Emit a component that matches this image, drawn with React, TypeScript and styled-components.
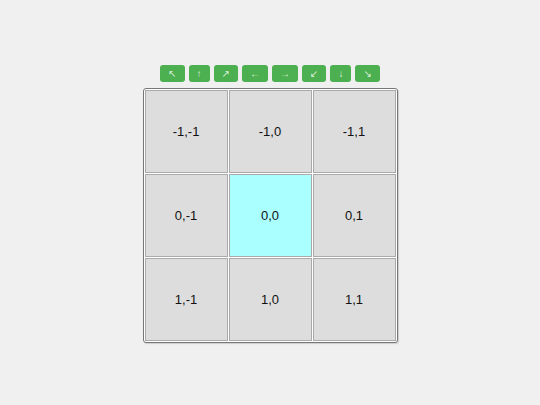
import styled, { createGlobalStyle } from "styled-components";

const GlobalStyle = createGlobalStyle`
	html, body {
		margin: 0;
		padding: 0;
		background: #f0f0f0;
		font-family: "Liberation Sans", Arial, sans-serif;
	}
`;

const Page = styled.div`
	display: flex;
	flex-direction: column;
	align-items: center;
	justify-content: center;
	gap: 6px;
	height: 405px;
	padding-top: 3px;
	box-sizing: border-box;
`;

const Toolbar = styled.div`
	display: flex;
	gap: 4px;
`;

const MoveButton = styled.button`
	height: 17px;
	padding: 0 8px;
	border: none;
	border-radius: 3px;
	background: #4caf50;
	color: rgba(255, 255, 255, 0.85);
	font-family: "Liberation Sans", "DejaVu Sans", sans-serif;
	font-size: 10px;
	line-height: 17px;
	cursor: pointer;
`;

const Board = styled.div`
	display: grid;
	grid-template-columns: repeat(3, 83px);
	grid-auto-rows: 83px;
	gap: 1px;
	padding: 1px;
	background: #fff;
	border: 1px solid #777;
	border-radius: 3px;
	box-shadow: 1px 1px 1px rgba(0, 0, 0, 0.15);
`;

const Cell = styled.div<{ $active?: boolean }>`
	display: flex;
	align-items: center;
	justify-content: center;
	box-sizing: border-box;
	background: ${(p) => (p.$active ? "#aaffff" : "#dddddd")};
	border: 1px solid #aaa;
	color: #111;
	font-size: 13px;
`;

const moves = ["↖", "↑", "↗", "←", "→", "↙", "↓", "↘"];
const offsets = [-1, 0, 1];

export default function App() {
	return (
		<>
			<GlobalStyle />
			<Page>
				<Toolbar>
					{moves.map((m) => (
						<MoveButton key={m}>{m}</MoveButton>
					))}
				</Toolbar>
				<Board>
					{offsets.map((r) =>
						offsets.map((c) => (
							<Cell key={`${r},${c}`} $active={r === 0 && c === 0}>
								{r},{c}
							</Cell>
						))
					)}
				</Board>
			</Page>
		</>
	);
}
